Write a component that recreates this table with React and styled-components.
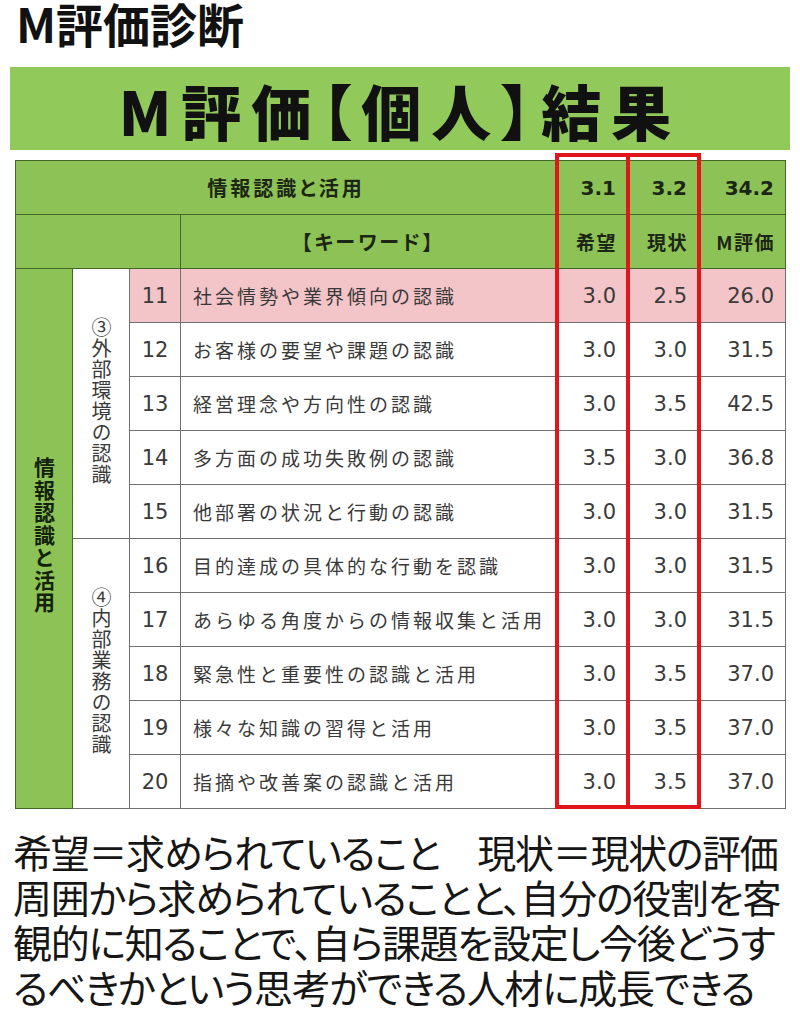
import React from "react";
import styled, { createGlobalStyle } from "styled-components";

const GlobalStyle = createGlobalStyle`
  html, body { margin: 0; padding: 0; background: #ffffff; }
  body { font-family: "Noto Sans CJK JP", "Noto Sans", sans-serif; color: #111; }
`;

const Page = styled.div`
  width: 800px;
`;

const Title = styled.h1`
  margin: 0;
  padding-left: 16px;
  font-size: 47px;
  line-height: 50px;
  height: 46px;
  font-weight: 700;
  color: #111;
  letter-spacing: 0px;
  transform: translateY(-2px);
`;

const Banner = styled.div`
  margin: 21px 10px 0;
  height: 83px;
  background: #92c95b;
  display: flex;
  align-items: center;
  justify-content: center;
  font-size: 60px;
  font-weight: 900;
  color: #111;
  letter-spacing: 10px;
  font-feature-settings: "palt";
  padding-top: 2px;
  box-sizing: border-box;
`;

const TableWrap = styled.div`
  position: relative;
  margin: 10px 15px 0;
  width: 770px;
`;

const Table = styled.table`
  border-collapse: collapse;
  table-layout: fixed;
  width: 770px;
  border: 1px solid #6d6d6d;
`;

const Row = styled.tr`
  height: 54px;
`;

const Cell = styled.td`
  padding: 0;
  border: 1px solid ${(p) => (p.$head ? "#44682a" : "#707070")};
  background: ${(p) => (p.$head ? "#8dc356" : p.$pink ? "#f4c5c8" : "#ffffff")};
  color: ${(p) => (p.$head ? "#1d2614" : "#333")};
  font-weight: ${(p) => (p.$head ? 700 : 400)};
  vertical-align: middle;
  overflow: hidden;
`;

const HeadText = styled(Cell)`
  text-align: ${(p) => p.$align || "center"};
  padding-right: ${(p) => (p.$align === "right" ? "10px" : "0")};
  font-size: ${(p) => (p.$align === "right" ? "19px" : "20px")};
  letter-spacing: ${(p) => (p.$align === "right" ? "1.5px" : "3px")};
  font-feature-settings: "palt";
`;

const HeadNum = styled(Cell)`
  text-align: right;
  padding-right: 11px;
  font-family: "DejaVu Sans", sans-serif;
  font-size: 20px;
`;

const NumCell = styled(Cell)`
  text-align: ${(p) => p.$align || "right"};
  padding-right: ${(p) => (p.$align === "center" ? "0" : "11px")};
  font-family: "DejaVu Sans", sans-serif;
  font-size: 21px;
  color: #3a3a3a;
`;

const KeyCell = styled(Cell)`
  padding-left: 12px;
  font-size: 19px;
  letter-spacing: 3px;
  white-space: nowrap;
  color: #3a3a3a;
`;

const SideCell = styled(Cell)`
  text-align: center;
`;

const Vertical = styled.span`
  display: inline-block;
  writing-mode: vertical-rl;
  text-orientation: upright;
  font-size: ${(p) => (p.$bold ? "21px" : "20px")};
  font-weight: ${(p) => (p.$bold ? 700 : 400)};
  letter-spacing: ${(p) => (p.$bold ? "1.5px" : "1px")};
  line-height: 1;
  color: ${(p) => (p.$bold ? "#14210b" : "#3a3a3a")};
`;

const RedBox = styled.div`
  position: absolute;
  top: -7px;
  left: ${(p) => p.$left}px;
  width: 75px;
  height: 656px;
  border: 4px solid #e0161c;
  box-sizing: border-box;
  pointer-events: none;
`;

const Note = styled.div`
  margin: 20px 0 0 13px;
  font-size: 39px;
  line-height: 45px;
  letter-spacing: -1.3px;
  font-feature-settings: "palt";
  color: #161616;
  font-weight: 400;
`;

const NoteLine = styled.div`
  white-space: nowrap;
`;

const rows = [
  { n: 11, k: "社会情勢や業界傾向の認識", a: "3.0", b: "2.5", m: "26.0", pink: true },
  { n: 12, k: "お客様の要望や課題の認識", a: "3.0", b: "3.0", m: "31.5" },
  { n: 13, k: "経営理念や方向性の認識", a: "3.0", b: "3.5", m: "42.5" },
  { n: 14, k: "多方面の成功失敗例の認識", a: "3.5", b: "3.0", m: "36.8" },
  { n: 15, k: "他部署の状況と行動の認識", a: "3.0", b: "3.0", m: "31.5" },
  { n: 16, k: "目的達成の具体的な行動を認識", a: "3.0", b: "3.0", m: "31.5" },
  { n: 17, k: "あらゆる角度からの情報収集と活用", a: "3.0", b: "3.0", m: "31.5" },
  { n: 18, k: "緊急性と重要性の認識と活用", a: "3.0", b: "3.5", m: "37.0" },
  { n: 19, k: "様々な知識の習得と活用", a: "3.0", b: "3.5", m: "37.0" },
  { n: 20, k: "指摘や改善案の認識と活用", a: "3.0", b: "3.5", m: "37.0" },
];

export default function App() {
  return (
    <Page>
      <GlobalStyle />
      <Title>M評価診断</Title>
      <Banner>M評価【個人】結果</Banner>
      <TableWrap>
        <Table>
          <colgroup>
            <col style={{ width: 57 }} />
            <col style={{ width: 57 }} />
            <col style={{ width: 51 }} />
            <col style={{ width: 376 }} />
            <col style={{ width: 71 }} />
            <col style={{ width: 71 }} />
            <col style={{ width: 87 }} />
          </colgroup>
          <tbody>
            <Row>
              <HeadText $head colSpan={4}>情報認識と活用</HeadText>
              <HeadNum $head>3.1</HeadNum>
              <HeadNum $head>3.2</HeadNum>
              <HeadNum $head>34.2</HeadNum>
            </Row>
            <Row>
              <HeadText $head colSpan={3}></HeadText>
              <HeadText $head>【キーワード】</HeadText>
              <HeadText $head $align="right">希望</HeadText>
              <HeadText $head $align="right">現状</HeadText>
              <HeadText $head $align="right">M評価</HeadText>
            </Row>
            {rows.map((r, i) => (
              <Row key={r.n}>
                {i === 0 && (
                  <SideCell $head rowSpan={10}>
                    <Vertical $bold>情報認識と活用</Vertical>
                  </SideCell>
                )}
                {i === 0 && (
                  <SideCell rowSpan={5}>
                    <Vertical>③外部環境の認識</Vertical>
                  </SideCell>
                )}
                {i === 5 && (
                  <SideCell rowSpan={5}>
                    <Vertical>④内部業務の認識</Vertical>
                  </SideCell>
                )}
                <NumCell $pink={r.pink} $align="center">{r.n}</NumCell>
                <KeyCell $pink={r.pink}>{r.k}</KeyCell>
                <NumCell $pink={r.pink}>{r.a}</NumCell>
                <NumCell $pink={r.pink}>{r.b}</NumCell>
                <NumCell $pink={r.pink}>{r.m}</NumCell>
              </Row>
            ))}
          </tbody>
        </Table>
        <RedBox $left={540} />
        <RedBox $left={611} />
      </TableWrap>
      <Note>
        <NoteLine>希望＝求められていること　現状＝現状の評価</NoteLine>
        <NoteLine>周囲から求められていることと、自分の役割を客</NoteLine>
        <NoteLine>観的に知ることで、自ら課題を設定し今後どうす</NoteLine>
        <NoteLine>るべきかという思考ができる人材に成長できる</NoteLine>
      </Note>
    </Page>
  );
}
